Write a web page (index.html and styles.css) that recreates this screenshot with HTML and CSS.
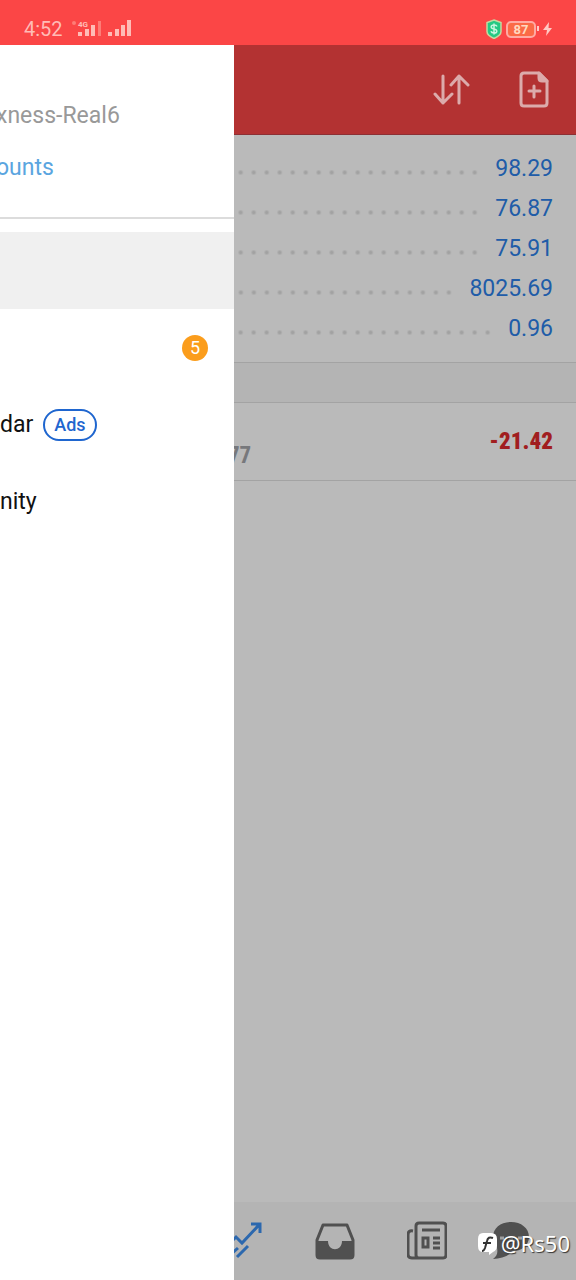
FILE: index.html
```html
<!DOCTYPE html>
<html lang="en">
<head>
	<meta charset="UTF-8">
	<meta name="viewport" content="width=device-width, initial-scale=1">
	<title>Trade</title>
	<link rel="stylesheet" href="styles.css">
</head>
<body>
	<div class="status">
		<span class="time">4:52</span>
		<svg class="signal" width="62" height="20" viewBox="0 0 62 20" fill="#ffbcb6">
			<circle cx="2" cy="4" r="2" fill="#fd7d77"/>
			<text class="net" x="6" y="8">4G</text>
			<rect x="6" y="13" width="4" height="4"/>
			<rect x="13" y="10" width="4" height="7"/>
			<rect x="19" y="6" width="4" height="11"/>
			<rect x="26" y="2" width="3" height="15" fill="#fd7d77"/>
			<rect x="36" y="13" width="4" height="4"/>
			<rect x="43" y="10" width="4" height="7"/>
			<rect x="49" y="6" width="4" height="11"/>
			<rect x="55" y="1" width="4" height="16"/>
		</svg>
		<div class="power">
			<svg width="18" height="20" viewBox="0 0 18 20">
				<path d="M9 1l7 2.500v9q0 4-7 7-7-3-7-7v-9z" fill="#25c983" stroke="#c5d9a0" stroke-width="1.500"/>
				<path d="M12 7.500q-.5-1.500-3-1.500-2.800 0-2.800 2 0 1.500 2.800 2t2.800 2.200q0 1.800-2.800 1.800-2.500 0-3-1.700M9 4.500v11" fill="none" stroke="#c9f6df" stroke-width="1.500"/>
			</svg>
			<span class="battery">87</span>
			<svg width="16" height="14" viewBox="0 0 16 14" fill="#ffc9c3"><rect y="4" width="2" height="5"/><path d="M12 0L6 8h4l-1 6 6-8h-3.500z"/></svg>
		</div>
	</div>

	<div class="page">
		<div class="drawer">
			<div class="account">
				<p class="server">xness-Real6</p>
				<a class="manage" href="#">ounts</a>
			</div>
			<ul class="menu">
				<li class="active"></li>
				<li><span class="count">5</span></li>
				<li>dar<span class="ads">Ads</span></li>
				<li>nity</li>
			</ul>
		</div>

		<div class="main">
			<div class="toolbar">
				<button aria-label="Sort">
					<svg width="40" height="40" viewBox="0 0 40 40" fill="none" stroke="#dcabab" stroke-width="3" stroke-linecap="round" stroke-linejoin="round">
						<path d="M13 6v27M5 24l8 9 9-9M29 33V6M21 15l8-9 9 9"/>
					</svg>
				</button>
				<button aria-label="New order">
					<svg width="40" height="40" viewBox="0 0 40 40" fill="none" stroke="#dcabab" stroke-width="3" stroke-linecap="round" stroke-linejoin="round">
						<path d="M10 3h15l8 8v22q0 3-3 3H10q-3 0-3-3V6q0-3 3-3z"/>
						<path d="M25 3v5q0 3 3 3h5z" fill="#dcabab"/>
						<path d="M20 16v11M15 21h11"/>
					</svg>
				</button>
			</div>

			<ul class="summary">
				<li><i class="dots"></i><span>98.29</span></li>
				<li><i class="dots"></i><span>76.87</span></li>
				<li><i class="dots"></i><span>75.91</span></li>
				<li><i class="dots"></i><span>8025.69</span></li>
				<li><i class="dots"></i><span>0.96</span></li>
			</ul>
			<div class="band"></div>
			<div class="position">
				<span class="price">77</span>
				<b class="loss">-21.42</b>
			</div>

			<div class="tabs">
				<a href="#" aria-label="Trade">
					<svg width="40" height="40" viewBox="0 0 40 40" fill="none" stroke="#2c68ae" stroke-width="3">
						<path d="M2 27l11-11 6 6L36 4M28 3h9v9M5 36l10-9M14 36l11-11"/>
					</svg>
				</a>
				<a href="#" aria-label="History">
					<svg width="40" height="40" viewBox="0 0 40 40">
						<path d="M8 4h24l6 15v15q0 3-3 3H5q-3 0-3-3V19z" fill="none" stroke="#505050" stroke-width="3" stroke-linejoin="round"/>
						<path d="M1 20h12c0 11 14 11 14 0h12v14q0 4-4 4H5q-4 0-4-4z" fill="#505050"/>
					</svg>
				</a>
				<a href="#" aria-label="News">
					<svg width="40" height="40" viewBox="0 0 40 40" fill="none" stroke="#505050" stroke-width="3">
						<path d="M12 2h24q3 0 3 3v29q0 3-3 3H12q-3 0-3-3V5q0-3 3-3zM6 10q-5-1-5 4v19q0 4 4 4h8"/>
						<path d="M15 9h18M26 17h7M26 22h7M26 27h7"/>
						<path d="M16 17h5v9h-5z"/>
					</svg>
				</a>
				<a href="#" aria-label="Messages">
					<svg width="56" height="40" viewBox="0 0 56 40">
						<path d="M20 1c10 0 18 6 18 15 0 8-7 14-16 14-4 5-12 8-20 8 4-3 5-6 4-11-3-3-4-7-4-11C2 7 10 1 20 1z" fill="#505050"/>
						<path d="M9 17h4M18 17h4M27 17h4" stroke="#a0a0a0" stroke-width="3"/>
					</svg>
				</a>
			</div>
		</div>

		<div class="mark">
			<svg width="21" height="23" viewBox="0 0 21 23">
				<path d="M6 1h8q6 0 6 6v7q0 4-4 6l-4 3v-3H6q-5 0-5-6V7q0-6 5-6z" fill="#fff"/>
				<path d="M16 6q-5-2-6 3L8 16q-1 3-3 3M6 11h8" fill="none" stroke="#333" stroke-width="2"/>
			</svg>
			<span>@Rs50</span>
		</div>
	</div>
</body>
</html>
```

FILE: styles.css
```css
*{margin:0;padding:0;box-sizing:border-box;}
ul{list-style:none;}
a{text-decoration:none;}
svg{display:block;flex-shrink:0;}
body{min-height:100vh;display:flex;flex-direction:column;font-family:Roboto,"Liberation Sans",sans-serif;font-size:23px;line-height:40px;background:#bababa;}

.status{height:45px;padding:13px 23px 0 24px;display:flex;align-items:center;background:#fb4646;color:#ffbcb6;}
.time{font-size:20px;line-height:32px;}
.signal{margin-left:9px;}
.net{font-size:8px;font-weight:bold;}
.power{margin-left:auto;display:flex;align-items:center;gap:3px;}
.battery{width:30px;height:17px;border:2px solid #ffaaa3;border-radius:5px;background:#fb6a46;color:#ffd9c0;font-size:13px;font-weight:bold;line-height:13px;text-align:center;}
.battery + svg{margin-left:-2px;}

.page{flex:1;display:flex;position:relative;}
.drawer{width:234px;flex-shrink:0;background:#fff;overflow:hidden;}
.account{height:174px;padding-top:51px;margin-left:-4px;border-bottom:2px solid #dcdcdc;}
.server{color:#999;margin-bottom:12px;}
.manage{display:block;color:#5aa5e0;}
.menu{margin-top:13px;color:#111;}
.menu li{height:77px;padding-right:26px;display:flex;align-items:center;}
.menu .active{background:#f0f0f0;}
.count{width:26px;height:26px;margin-left:auto;border-radius:50%;background:#fb9d1c;color:#fff;font-size:18px;line-height:26px;text-align:center;}
.ads{height:32px;margin-left:10px;padding:0 9px;border:2px solid #1f66cf;border-radius:16px;color:#1f66cf;font-size:18px;font-weight:500;line-height:28px;}

.main{flex:1;min-width:0;display:flex;flex-direction:column;overflow:hidden;}
.toolbar{height:90px;padding-right:22px;display:flex;align-items:center;justify-content:flex-end;gap:44px;background:#b33232;border-bottom:1px solid #8c3034;}
.toolbar button{border:0;background:none;}
.summary{padding:14px 23px 13px 0;border-bottom:1px solid #a3a3a3;color:#205ca8;}
.summary li{display:flex;align-items:center;gap:14px;}
.dots{flex:1;height:13px;margin-top:7px;background:radial-gradient(circle,#a2a2a2 1px,transparent 3px) right center/13px 13px repeat-x;}
.band{height:40px;background:#b4b4b4;border-bottom:1px solid #a3a3a3;}
.position{height:78px;padding-right:23px;display:flex;justify-content:space-between;border-bottom:1px solid #a3a3a3;font-family:"Roboto Condensed",Roboto,sans-serif;font-weight:bold;}
.price{align-self:flex-end;margin:0 0 4px -6px;color:#77787c;}
.loss{align-self:center;color:#a11e20;}

.tabs{height:78px;margin-top:auto;padding-right:11px;display:flex;justify-content:flex-end;align-items:center;background:#b4b4b4;}
.tabs a{width:92px;flex-shrink:0;display:flex;justify-content:center;}
.mark{position:absolute;right:6px;bottom:21px;display:flex;align-items:center;gap:3px;color:#fff;font-family:"Noto Sans",sans-serif;font-size:22px;line-height:32px;text-shadow:1px 1px 1px #333;}
```
